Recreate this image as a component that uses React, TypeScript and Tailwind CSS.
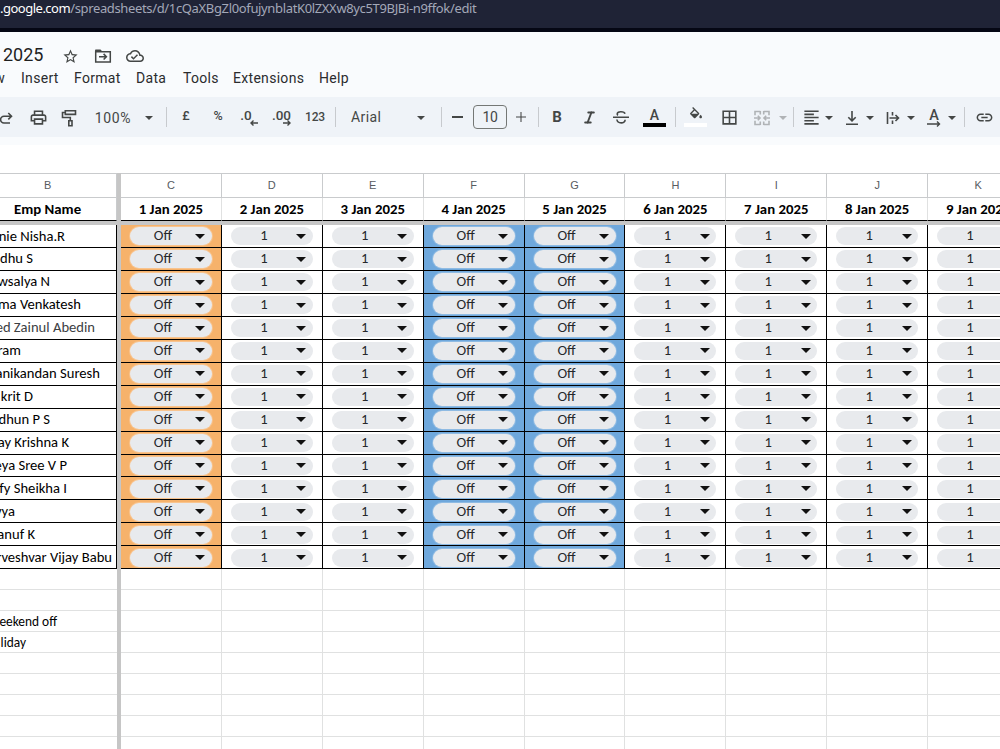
import type { ReactNode } from "react";
import { Italic } from "lucide-react";

type Employee = {
  name: string;
  // Right edge of the visible part of the name, the start is scrolled away
  end: number;
  muted?: boolean;
};

const EMPLOYEES: Employee[] = [
  { name: "nie Nisha.R", end: 65 },
  { name: "dhu S", end: 33 },
  { name: "wsalya N", end: 50 },
  { name: "ma Venkatesh", end: 81 },
  { name: "ed Zainul Abedin", end: 95, muted: true },
  { name: "ram", end: 21 },
  { name: "anikandan Suresh", end: 100 },
  { name: "krit D", end: 33 },
  { name: "dhun P S", end: 50 },
  { name: "ay Krishna K", end: 69 },
  { name: "eya Sree V P", end: 67 },
  { name: "ffy Sheikha I", end: 67 },
  { name: "vya", end: 15 },
  { name: "anuf K", end: 35 },
  { name: "rveshvar Vijay Babu", end: 112 },
];

const COLUMNS = [
  { letter: "C", date: "1 Jan 2025", kind: "holiday" },
  { letter: "D", date: "2 Jan 2025", kind: "work" },
  { letter: "E", date: "3 Jan 2025", kind: "work" },
  { letter: "F", date: "4 Jan 2025", kind: "weekend" },
  { letter: "G", date: "5 Jan 2025", kind: "weekend" },
  { letter: "H", date: "6 Jan 2025", kind: "work" },
  { letter: "I", date: "7 Jan 2025", kind: "work" },
  { letter: "J", date: "8 Jan 2025", kind: "work" },
  { letter: "K", date: "9 Jan 2025", kind: "work" },
];

const CELL_BG: Record<string, string> = {
  holiday: "bg-[#f6b26b]",
  weekend: "bg-[#6fa8dc]",
  work: "bg-white",
};

const CHIP_RING: Record<string, string> = {
  holiday: "ring-1 ring-[#f8c48f]",
  weekend: "ring-1 ring-[#8fbbe3]",
  work: "",
};

// Legend and empty rows under the table
const NOTES = [
  { text: "", end: 0 },
  { text: "", end: 0 },
  { text: "eekend off", end: 57 },
  { text: "liday", end: 26 },
  { text: "", end: 0 },
  { text: "", end: 0 },
  { text: "", end: 0 },
  { text: "", end: 0 },
  { text: "", end: 0 },
];

const MENUS = [
  { label: "Insert", width: "w-[53px]" },
  { label: "Format", width: "w-[62px]" },
  { label: "Data", width: "w-[47px]" },
  { label: "Tools", width: "w-[50px]" },
  { label: "Extensions", width: "w-[86px]" },
  { label: "Help", width: "w-[40px]" },
];

function Icon({ d, className }: { d: string; className: string }) {
  return (
    <svg viewBox="0 0 24 24" fill="currentColor" className={`shrink-0 ${className}`}>
      <path d={d} />
    </svg>
  );
}

function Line({ d, className = "size-[18px]" }: { d: string; className?: string }) {
  return (
    <svg viewBox="0 0 18 18" fill="none" stroke="currentColor" strokeWidth="1.6" className={`shrink-0 ${className}`}>
      <path d={d} />
    </svg>
  );
}

function Tool({ className, children }: { className: string; children: ReactNode }) {
  return <div className={`flex h-full shrink-0 items-center justify-center ${className}`}>{children}</div>;
}

function Caret({ className = "w-[14px]" }: { className?: string }) {
  return (
    <Tool className={`pt-px ${className}`}>
      <svg viewBox="0 0 8 4" fill="currentColor" className="h-1 w-2 shrink-0">
        <path d="M0 0h8L4 4z" />
      </svg>
    </Tool>
  );
}

function Divider({ className }: { className: string }) {
  return (
    <Tool className={className}>
      <div className="h-5 w-px shrink-0 bg-[#c7cace]" />
    </Tool>
  );
}

function TitleBar() {
  return (
    <div className="h-[65px] bg-[#f9fbfd]">
      <div className="flex h-[35px] items-end">
        <span className="w-[60px] pl-[3px] text-[18px] leading-6 text-[#1f1f1f]">2025</span>
        <div className="flex h-6 items-center pt-0.5 text-[#444746]">
          <Icon
            className="ml-[2px] size-[17px]"
            d="M22 9.24l-7.19-.62L12 2 9.19 8.63 2 9.24l5.46 4.73L5.82 21 12 17.27 18.18 21l-1.63-7.03L22 9.24zM12 15.4l-3.76 2.27 1-4.28-3.32-2.88 4.38-.38L12 6.1l1.71 4.04 4.38.38-3.32 2.88 1 4.28L12 15.4z"
          />
          {/* Folder with a filled tab and an arrow */}
          <svg viewBox="0 0 18 18" fill="none" stroke="currentColor" strokeWidth="1.5" className="ml-[15px] size-[18px] shrink-0">
            <path d="M1.700 4.700h14.600v10.200H1.700zM5 9.700h7M9.600 6.900l2.800 2.800-2.800 2.800" />
            <path d="M1 5V3.500C1 3 1.400 2.500 2 2.500h4.500L8.800 5z" fill="currentColor" stroke="none" />
          </svg>
          <Icon
            className="ml-[14px] size-[18px]"
            d="M19.35 10.04C18.67 6.59 15.64 4 12 4 9.11 4 6.6 5.64 5.35 8.04 2.34 8.36 0 10.91 0 14c0 3.31 2.69 6 6 6h13c2.76 0 5-2.24 5-5 0-2.64-2.05-4.78-4.65-4.96zM19 18H6c-2.21 0-4-1.79-4-4 0-2.05 1.53-3.76 3.56-3.97l1.07-.11.5-.95C8.08 7.14 9.94 6 12 6c2.62 0 4.88 1.86 5.39 4.43l.3 1.5 1.53.11c1.56.1 2.78 1.41 2.78 2.96 0 1.65-1.35 3-3 3zm-9-3.82l-2.09-2.09L6.5 13.5 10 17l6.01-6.01-1.41-1.41z"
          />
        </div>
      </div>
      <div className="flex h-[22px] items-center text-[14px] tracking-[0.3px] text-[#2b2c2e]">
        <span className="flex w-[21px] shrink-0">
          <span className="flex w-[5px] justify-end overflow-hidden">w</span>
        </span>
        {MENUS.map((menu) => (
          <span key={menu.label} className={`shrink-0 ${menu.width}`}>
            {menu.label}
          </span>
        ))}
      </div>
    </div>
  );
}

function Toolbar() {
  return (
    <div className="flex h-10 items-center overflow-hidden bg-[#eff3f8] text-[#444746]">
      <Tool className="-ml-[10px] w-[30px]">
        <Line d="M14 15H8a3.400 3.400 0 0 1 0-6.800h7.500M12.300 5l3.200 3.200-3.200 3.200" />
      </Tool>
      <Tool className="w-9 pt-px">
        <Icon
          className="size-[19px]"
          d="M19 8h-1V3H6v5H5c-1.66 0-3 1.34-3 3v6h4v4h12v-4h4v-6c0-1.66-1.34-3-3-3zM8 5h8v3H8V5zm8 12v2H8v-4h8v2zm2-2v-2H6v2H4v-4c0-.55.45-1 1-1h14c.55 0 1 .45 1 1v4h-2z"
        />
      </Tool>
      <Tool className="w-[26px] pt-0.5">
        <Line d="M5.300 1.800h10.200v3.600H5.300zM5.300 3.500H2.500v5h7.800v3M8.800 11.800h3.200v5H8.800z" />
      </Tool>
      <Tool className="w-[62px] pt-0.5 text-[14px] tracking-[0.6px]">100%</Tool>
      <Caret className="w-[10px]" />
      <Divider className="w-6" />
      <Tool className="w-4 pb-px text-[12.500px] font-medium">£</Tool>
      <Tool className="w-12 pb-px text-[12.500px] font-medium">%</Tool>
      <Tool className="w-[14px]">
        <div className="relative -ml-1.5 pb-1 text-[13.500px] leading-4 font-medium">
          .0
          <svg viewBox="0 0 8 6" fill="none" stroke="currentColor" strokeWidth="1.4" className="absolute -right-1.5 bottom-px h-1.5 w-2">
            <path d="M8 3H1.500M3.500 .6L1 3l2.500 2.400" />
          </svg>
        </div>
      </Tool>
      <Tool className="w-[52px]">
        <div className="relative -ml-px pb-1 text-[13.500px] leading-4 font-medium">
          .00
          <svg viewBox="0 0 8 6" fill="none" stroke="currentColor" strokeWidth="1.4" className="absolute right-0 bottom-px h-1.5 w-2">
            <path d="M0 3h6.500M4.500 .6L7 3 4.500 5.400" />
          </svg>
        </div>
      </Tool>
      <Tool className="w-[14px] text-[12px] font-medium tracking-[-0.2px]">123</Tool>
      <Divider className="w-[26px]" />
      <div className="w-[66px] shrink-0 pl-[3px] text-[14px] tracking-[0.4px]">Arial</div>
      <Caret />
      <Divider className="w-[26px]" />
      <Tool className="w-2 pr-0.5">
        <div className="h-[1.5px] w-[11px] shrink-0 bg-[#444746]" />
      </Tool>
      <div className="ml-[11px] flex h-6 w-[34px] shrink-0 items-center justify-center rounded border border-[#747775] text-[14px] tracking-[-0.3px]">
        10
      </div>
      <Tool className="w-7">
        <Line className="size-3" d="M9 1.500v15M1.500 9h15" />
      </Tool>
      <Divider className="w-1.5" />
      <Tool className="w-8 pt-px text-[15px] font-bold">B</Tool>
      <Tool className="w-8 pt-px">
        <Italic className="size-[15px]" strokeWidth={3} />
      </Tool>
      <Tool className="w-8">
        <Line d="M1 9.300h16M13 5.700C12.500 3.500 5.200 2.700 5.200 6c0 .6.300 1 .7 1.300M4.900 11.500c.5 4.500 8.400 4.300 8.200.3" />
      </Tool>
      <Tool className="w-[35px]">
        <div className="flex w-[23px] shrink-0 flex-col items-center">
          <span className="text-[14px] leading-4 font-medium">A</span>
          <span className="h-1 w-full bg-black" />
        </div>
      </Tool>
      <Divider className="w-1.5" />
      <Tool className="w-[35px]">
        <div className="flex w-[23px] shrink-0 flex-col items-center">
          <Icon
            className="size-4"
            d="M16.560 8.940L7.620 0 6.210 1.410l2.380 2.380-5.150 5.150c-.59.59-.59 1.540 0 2.120l5.500 5.500c.29.29.68.44 1.060.44s.77-.15 1.060-.44l5.500-5.500c.59-.58.59-1.530 0-2.120zM5.210 10L10 5.210 14.790 10H5.210zM19 11.500s-2 2.170-2 3.500c0 1.100.9 2 2 2s2-.9 2-2c0-1.330-2-3.500-2-3.500z"
          />
          <span className="h-1 w-full bg-white" />
        </div>
      </Tool>
      <Tool className="w-8 pt-px">
        <Icon className="size-[19px]" d="M3 3v18h18V3H3zm8 16H5v-6h6v6zm0-8H5V5h6v6zm8 8h-6v-6h6v6zm0-8h-6V5h6v6z" />
      </Tool>
      <Tool className="w-[34px] pt-px text-[#b0b3b6]">
        <Line d="M7.300 2.500H2v3.700M10.700 2.500H16v3.700M7.300 15.500H2v-3.700M10.700 15.500H16v-3.700M7.300 2v3.500M10.700 2v3.500M7.300 12.500V16M10.700 12.500V16M1 9h6M17 9h-6M4.800 6.800L7 9l-2.200 2.200M13.200 6.800L11 9l2.200 2.200" />
      </Tool>
      <div className="h-full text-[#b0b3b6]">
        <Caret className="w-2" />
      </div>
      <Divider className="w-[13px]" />
      <Tool className="w-[22px] pt-px">
        <Icon
          className="size-[19px]"
          d="M15 15H3v2h12v-2zm0-8H3v2h12V7zM3 13h18v-2H3v2zm0 8h18v-2H3v2zM3 3v2h18V3H3z"
        />
      </Tool>
      <Caret />
      <Tool className="ml-[5px] w-[22px] pt-px">
        <Line d="M9 2v9.500M5.300 8.200L9 11.900l3.700-3.700M3 15.300h12" />
      </Tool>
      <Caret />
      <Tool className="ml-[5px] w-[22px] pt-px">
        <Line d="M3.500 3v12M8.500 3v3.500M8.500 11.500V15M5.500 9h8.500M11.500 6l3 3-3 3" />
      </Tool>
      <Caret />
      <Tool className="ml-[5px] w-[22px]">
        <div className="relative pb-0.5 text-[14.500px] leading-4 font-medium">
          A
          <svg viewBox="0 0 14 6" fill="none" stroke="currentColor" strokeWidth="1.4" className="absolute -bottom-px -left-[2px] h-1.5 w-3.5">
            <path d="M0 3h12M10 .6L12.500 3 10 5.400" />
          </svg>
        </div>
      </Tool>
      <Caret />
      <Divider className="w-[10px]" />
      <Tool className="w-[30px] pt-px">
        <Icon
          className="size-[19px]"
          d="M3.900 12c0-1.710 1.390-3.100 3.100-3.100h4V7H7c-2.760 0-5 2.240-5 5s2.240 5 5 5h4v-1.900H7c-1.710 0-3.100-1.390-3.100-3.100zM8 13h8v-2H8v2zm9-6h-4v1.900h4c1.710 0 3.100 1.390 3.100 3.100s-1.390 3.100-3.100 3.100h-4V17h4c2.760 0 5-2.240 5-5s-2.240-5-5-5z"
        />
      </Tool>
    </div>
  );
}

function Chip({ kind }: { kind: string }) {
  return (
    <div className={`flex h-[18px] w-[82px] items-center rounded-full bg-[#e8eaed] ${CHIP_RING[kind]}`}>
      <span className="w-[66px] text-center text-[#26282b]">{kind === "work" ? "1" : "Off"}</span>
      <svg viewBox="0 0 10 5" fill="#111" className="-ml-[0.5px] h-[5px] w-[10px]">
        <path d="M0 0h10L5 5z" />
      </svg>
    </div>
  );
}

function Sheet() {
  return (
    <div className="flex">
      {/* Frozen name column */}
      <div className="w-[117px] shrink-0 text-[14.600px] text-black">
        <div className="flex h-[25px] items-center border-y border-r border-[#c9cbcd] pl-[44px] font-['Liberation_Sans',sans-serif] text-[11px] text-[#575b5f]">
          B
        </div>
        <div className="flex h-[23px] items-center border-r border-b border-[#c9cbcd] border-b-black pl-[14px] text-[14.800px] leading-5 font-bold">
          Emp Name
        </div>
        <div className="h-1 bg-[#c6c6c6]" />
        {EMPLOYEES.map((person) => (
          <div key={person.name} className="h-[22.960px] overflow-hidden border-r border-b border-black">
            <div
              className={`flex h-full items-center justify-end pt-px whitespace-nowrap ${person.muted ? "text-[#3c4043]" : ""}`}
              style={{ width: person.end }}
            >
              {person.name}
            </div>
          </div>
        ))}
        {NOTES.map((note, i) => (
          <div key={i} className="h-[21px] overflow-hidden border-b border-[#e0e1e1] text-[13.400px]">
            <div className="flex h-full items-center justify-end pt-0.5 whitespace-nowrap" style={{ width: note.end }}>
              {note.text}
            </div>
          </div>
        ))}
      </div>

      <div className="w-1 shrink-0 bg-[#c6c6c6]" />

      {COLUMNS.map((column) => (
        <div key={column.letter} className="w-[100.900px] shrink-0 text-[14.600px]">
          <div className="flex h-[25px] items-center justify-center border-y border-r border-[#c9cbcd] font-['Liberation_Sans',sans-serif] text-[11px] text-[#575b5f]">
            {column.letter}
          </div>
          <div className="flex h-[23px] items-center justify-center border-r border-b border-[#e0e1e1] border-b-black text-[14.800px] leading-5 font-bold whitespace-nowrap text-black">
            {column.date}
          </div>
          <div className="h-1 bg-[#c6c6c6]" />
          {EMPLOYEES.map((person) => (
            <div
              key={person.name}
              className={`flex h-[22.960px] items-center justify-center border-r border-b border-black pt-[0.5px] ${CELL_BG[column.kind]}`}
            >
              <Chip kind={column.kind} />
            </div>
          ))}
          {NOTES.map((_, i) => (
            <div key={i} className="h-[21px] border-r border-b border-[#e0e1e1]" />
          ))}
        </div>
      ))}
    </div>
  );
}

export default function App() {
  return (
    <div className="h-[749px] w-[1000px] overflow-hidden bg-white font-[Roboto,sans-serif]">
      <div className="h-8 overflow-hidden border-b-4 border-[#050714] bg-[#1f2336] font-['Noto_Sans',sans-serif] text-[13px] leading-[17px] tracking-[-0.35px] whitespace-nowrap text-[#a3a8b8]">
        <span className="tracking-[-0.5px] text-white">.google.com</span>
        /spreadsheets/d/1cQaXBgZl0ofujynblatK0lZXXw8yc5T9BJBi-n9ffok/edit
      </div>
      <TitleBar />
      <Toolbar />
      <div className="h-2 bg-[#f9fbfd]" />
      <div className="h-7" />
      <div className="font-[Carlito,Lato,sans-serif]">
        <Sheet />
      </div>
    </div>
  );
}
